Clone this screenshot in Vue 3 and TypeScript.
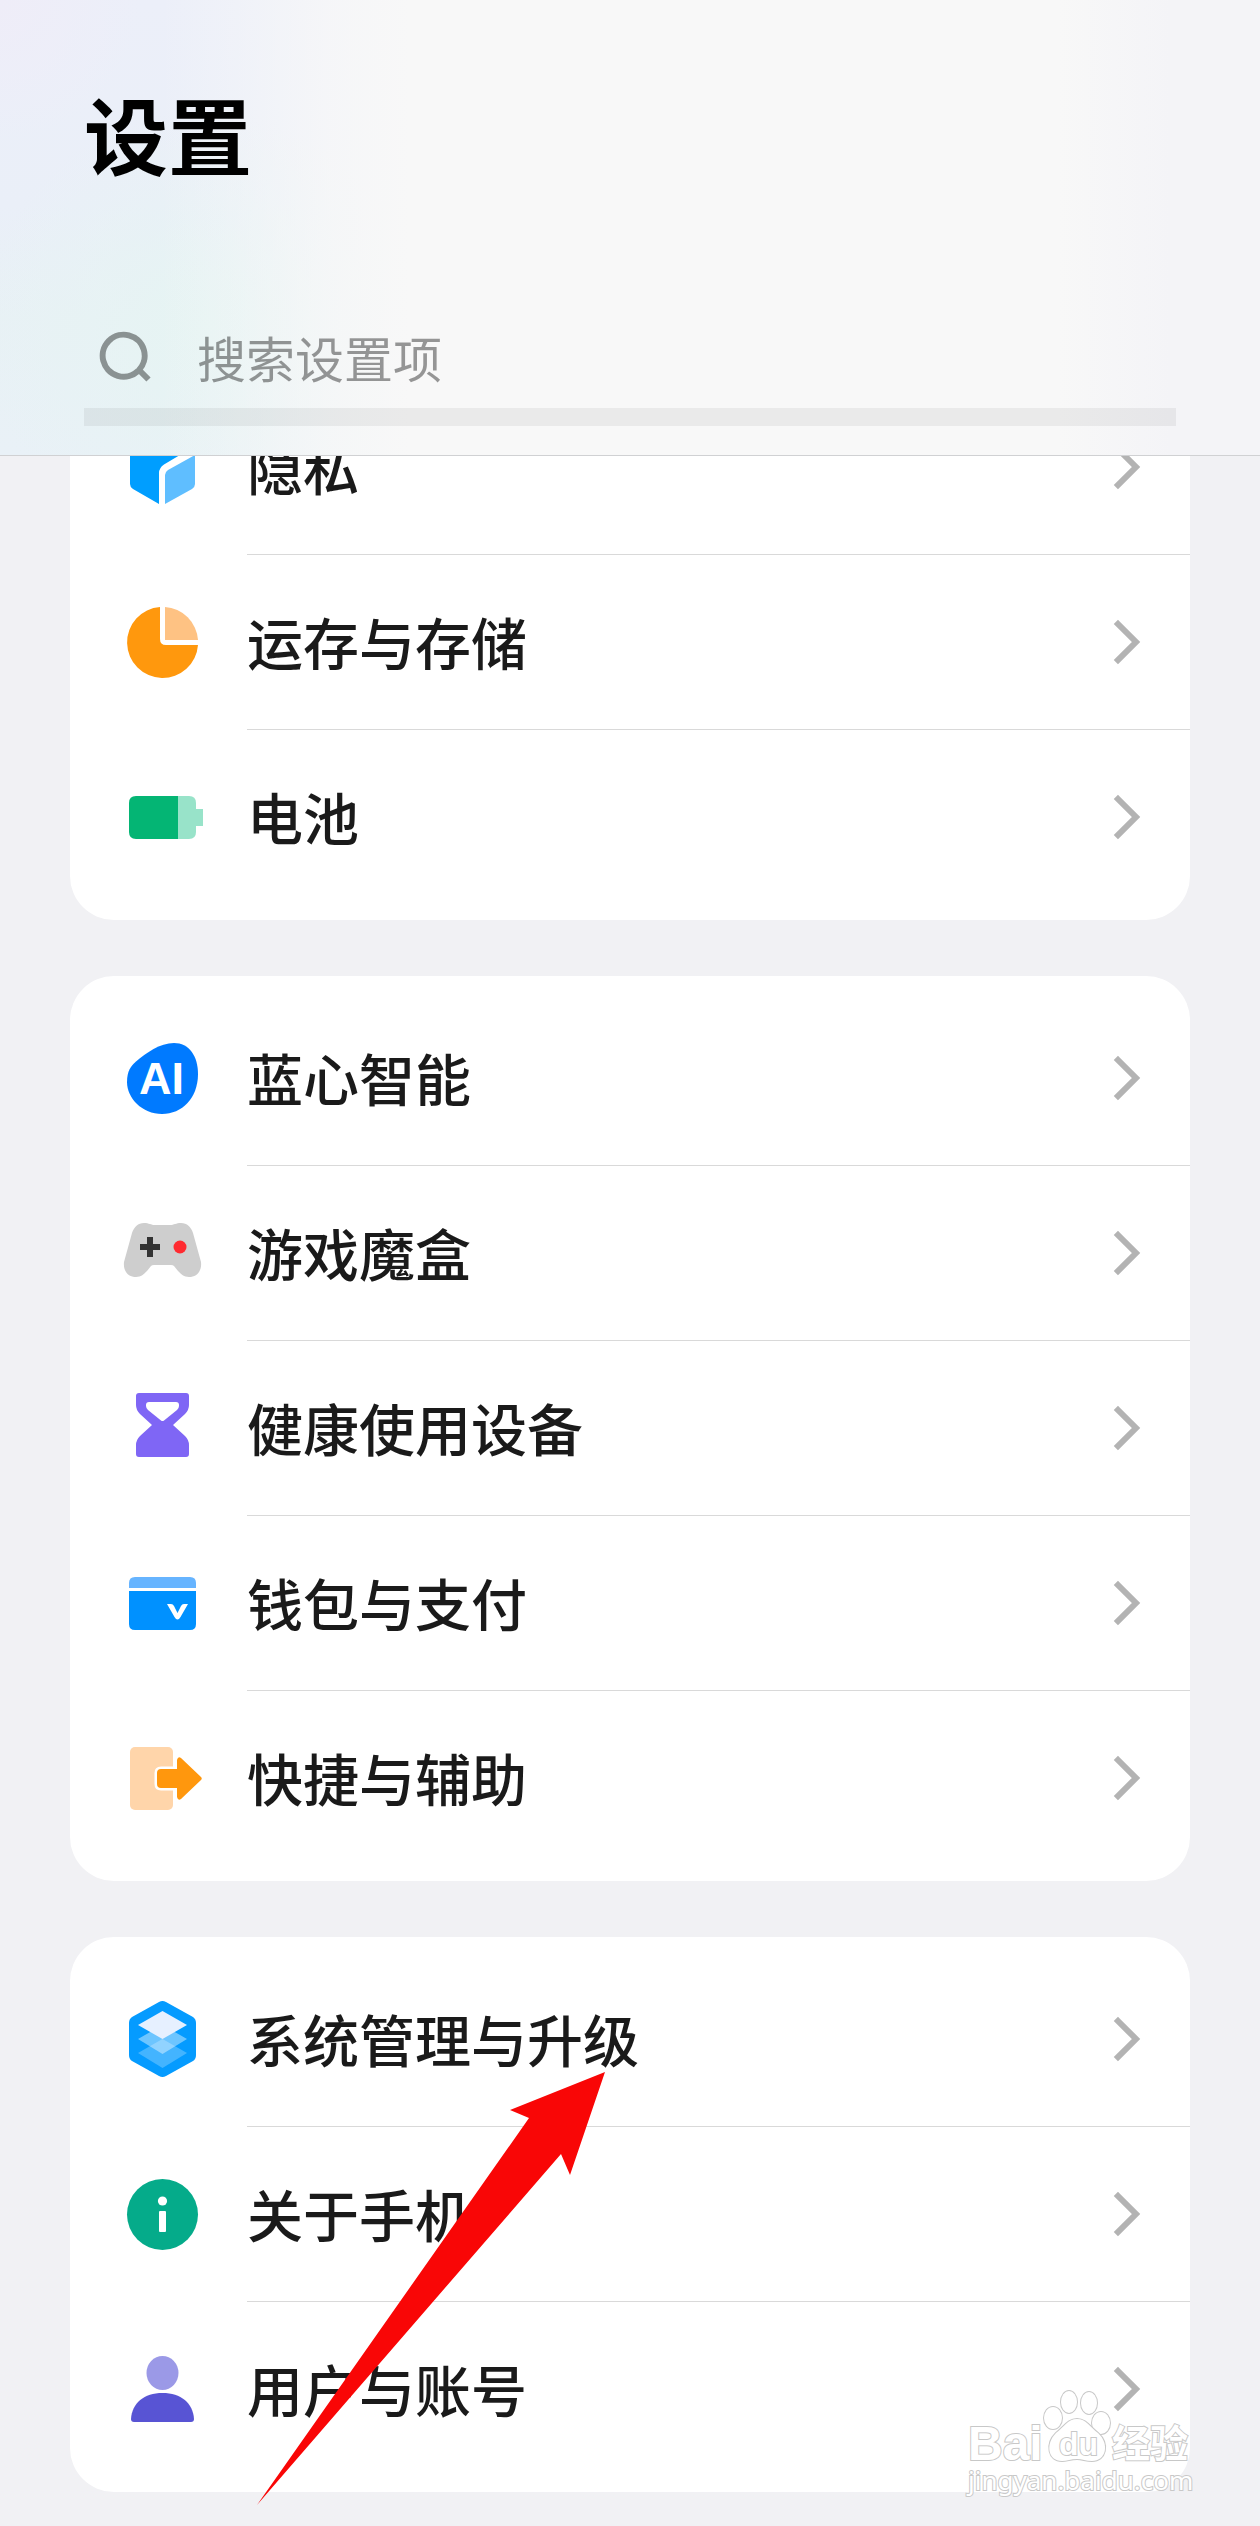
<script setup lang="ts">
interface SettingItem {
  id: string
  label: string
}

interface SettingGroup {
  id: string
  items: SettingItem[]
}

const groups: SettingGroup[] = [
  {
    id: 'device',
    items: [
      { id: 'privacy', label: '隐私' },
      { id: 'storage', label: '运存与存储' },
      { id: 'battery', label: '电池' },
    ],
  },
  {
    id: 'features',
    items: [
      { id: 'ai', label: '蓝心智能' },
      { id: 'game', label: '游戏魔盒' },
      { id: 'health', label: '健康使用设备' },
      { id: 'wallet', label: '钱包与支付' },
      { id: 'shortcut', label: '快捷与辅助' },
    ],
  },
  {
    id: 'system',
    items: [
      { id: 'upgrade', label: '系统管理与升级' },
      { id: 'about', label: '关于手机' },
      { id: 'account', label: '用户与账号' },
    ],
  },
]
</script>

<template>
  <div class="page">
    <header class="header">
      <h1 class="title">设置</h1>
      <label class="search">
        <svg class="search-icon" viewBox="0 0 54 54" aria-hidden="true">
          <path d="M41 39 A21 21 0 1 0 40 40 L41 39 L50.500 48.500" />
        </svg>
        <input class="search-input" type="search" placeholder="搜索设置项" aria-label="搜索设置项" />
      </label>
    </header>

    <main class="groups">
      <section v-for="group in groups" :key="group.id" class="group">
        <ul class="list">
          <li v-for="item in group.items" :key="item.id" class="item">
            <a class="row" :href="'#' + item.id">
              <svg class="icon" viewBox="0 0 81 81" aria-hidden="true">
                <g v-if="item.id === 'privacy'">
                  <path fill="#009eff" d="M8 24 Q8 20 12 18 L37 4 Q40.500 2 44 4 L68 17 Q72 20 68 22 L42 37.500 Q37 41 37 46 V77 L11 62 Q8 60 8 57Z" />
                  <path fill="#5fbeff" d="M73 28 V57 Q73 60 70 62 L43 77 V48 Q43 45 46 43Z" />
                </g>
                <g v-else-if="item.id === 'storage'">
                  <path fill="#ff980d" d="M38 5 A35.500 35.500 0 1 0 76 43 H44 Q38 43 38 37Z" />
                  <path fill="#fec283" d="M43 5 A35.500 35.500 0 0 1 76 38 H43Z" />
                </g>
                <g v-else-if="item.id === 'battery'">
                  <path fill="#98e3c9" d="M56 19 H67 Q74 19 74 26 V32 H81 V49 H74 V55 Q74 62 67 62 H56Z" />
                  <path fill="#04b574" d="M14 19 H56 V62 H14 Q7 62 7 55 V26 Q7 19 14 19Z" />
                </g>
                <g v-else-if="item.id === 'ai'">
                  <path fill="#007aff" d="M5 44 C5 33 9 28 14 23.500 C24 15 38 5 52 5 C67 5 76 18 76 36 C76 60 60 76 40 76 C20 76 5 60 5 44Z" />
                  <text x="17" y="56" class="ai-text">AI</text>
                </g>
                <g v-else-if="item.id === 'game'">
                  <path fill="#cecece" d="M22 10 C27 10 29 12 33 12 H48 C52 12 54 10 59 10 C65 10 69 14 71 20 L79 49 C80 58 75 64 67 64 C62 64 59 61 56 58 L52 53 Q51 52 49 52 H32 Q30 52 29 53 L25 58 C22 61 19 64 14 64 C6 64 1 58 2 49 L10 20 C12 14 16 10 22 10Z" />
                  <path fill="#333" d="M25 24 H31 V31 H38 V37 H31 V44 H25 V37 H18 V31 H25Z" />
                  <circle cx="58" cy="34" r="6.500" fill="#ff2a30" />
                </g>
                <g v-else-if="item.id === 'health'">
                  <path fill="#7f66f5" d="M17 5 H64 Q67 5 67 8 V17 Q67 22 63 26 L51 37 L63 48 Q67 52 67 57 V66 Q67 69 64 69 H17 Q14 69 14 66 V57 Q14 52 18 48 L30 37 L18 26 Q14 22 14 17 V8 Q14 5 17 5Z" />
                  <path fill="#fff" d="M27 14 H54 Q57 14 57 17 V18 Q57 20 55 22 L42 32.500 Q40.500 33.500 39 32.500 L26 22 Q24 20 24 18 V17 Q24 14 27 14Z" />
                </g>
                <g v-else-if="item.id === 'wallet'">
                  <path fill="#66b4ff" d="M7 25 V20 Q7 14 13 14 H68 Q74 14 74 20 V25Z" />
                  <path fill="#0091ff" d="M7 28 H74 V61 Q74 67 68 67 H13 Q7 67 7 61Z" />
                  <path fill="#fff" d="M45 41 H49 Q51 41 52 43 L55.500 50 L59 43 Q60 41 62 41 H66 L58.500 54 Q55.500 59 52.500 54Z" />
                </g>
                <g v-else-if="item.id === 'shortcut'">
                  <rect x="8" y="9" width="43" height="63" rx="5" fill="#ffd5aa" />
                  <path class="exit-arrow" d="M39 31 H55 V22 Q56 18 59 20 L79 39 Q80.500 40.500 79 42 L59 61 Q56 63 55 59 V50 H39 Q35 50 35 46 V35 Q35 31 39 31Z" />
                </g>
                <g v-else-if="item.id === 'upgrade'">
                  <path fill="#059bff" d="M37 3 Q40.500 1 44 3 L71 18 Q74 20 74 24 V56 Q74 60 71 62 L44 77 Q40.500 79 37 77 L10 62 Q7 60 7 56 V24 Q7 20 10 18Z" />
                  <path fill="#fff" fill-opacity=".25" d="M40.500 40 L65 54 L40.500 69 L16 54Z" />
                  <path fill="#fff" fill-opacity=".42" d="M40.500 26 L65 40 L40.500 55 L16 40Z" />
                  <path fill="#e6f0ff" d="M40.500 12 L65 26 L40.500 40 L16 26Z" />
                </g>
                <g v-else-if="item.id === 'about'">
                  <circle cx="40.500" cy="40.500" r="35.500" fill="#05ab8a" />
                  <circle cx="40.500" cy="27" r="4.600" fill="#fff" />
                  <rect x="37" y="37" width="7" height="21" rx="1" fill="#fff" />
                </g>
                <g v-else>
                  <ellipse cx="40.500" cy="24" rx="16" ry="17" fill="#9b99e7" />
                  <path fill="#5854d4" d="M12 73 Q9 73 9 70 C10 54 22 44 40.500 44 C59 44 71 54 72 70 Q72 73 69 73Z" />
                </g>
              </svg>
              <span class="body">
                <span class="label">{{ item.label }}</span>
                <svg class="chevron" viewBox="0 0 30 49" aria-hidden="true">
                  <path d="M7 6 L25 24 L7 42" />
                </svg>
              </span>
            </a>
          </li>
        </ul>
        <svg v-if="group.id === 'system'" class="pointer" viewBox="0 0 348 433" aria-hidden="true">
          <path d="M348 0 L313 103 L304 82 L0 433 L272 46 L253 38Z" />
        </svg>
      </section>
    </main>

    <svg class="watermark" viewBox="0 0 236 116" role="img" aria-label="Baidu 经验">
      <g class="mark">
        <text x="5" y="76" class="mark-brand">Bai</text>
        <ellipse cx="90" cy="34" rx="9" ry="11" />
        <ellipse cx="106" cy="18" rx="8" ry="11" />
        <ellipse cx="126" cy="19" rx="8" ry="11" />
        <ellipse cx="138" cy="39" rx="9" ry="11" />
        <path d="M114 35 C123 35 127 43 135 49 C147 60 143 77 129 77 C123 77 119 75 114 75 C108 75 104 77 99 77 C85 77 82 60 93 49 C101 43 105 35 114 35Z" />
        <text x="96" y="71" class="mark-du">du</text>
        <text x="149" y="73" class="mark-cn">经验</text>
        <text x="5" y="106" class="mark-url">jingyan.baidu.com</text>
      </g>
    </svg>
  </div>
</template>

<style>
body {
  background: #f1f1f4;
}
</style>

<style scoped>
.page {
  position: relative;
  overflow: hidden;
  background: #f1f1f4;
  font-family: "Noto Sans CJK SC", "Noto Sans", sans-serif;
}

.header {
  position: relative;
  z-index: 1;
  padding: 91px 84px 29px;
  border-bottom: 1px solid #d0d1d3;
  background:
    linear-gradient(90deg, rgba(248, 248, 248, 0) 0, rgba(248, 248, 248, 0) 160px, rgba(248, 248, 248, 0.35) 240px, rgba(248, 248, 248, 0.8) 330px, #f8f8f8 410px, #f8f8f8 84%, #f4f4f7 93%),
    radial-gradient(circle at 0 0, #efedf8 0, rgba(239, 237, 248, 0) 140px),
    radial-gradient(circle at 200px 330px, #e6f4f3 0, rgba(230, 244, 243, 0) 220px),
    linear-gradient(180deg, #eceff9 0, #eaeff8 45%, #e8f1f5 70%, #e9f1f7 100%);
}

.title {
  margin: 0;
  color: #000;
  font-size: 84px;
  font-weight: 700;
  line-height: 84px;
}

.search {
  display: flex;
  align-items: center;
  height: 100px;
  margin-top: 133px;
  padding-left: 14px;
  border-bottom: 18px solid rgba(0, 0, 0, 0.055);
}

.search-icon {
  flex: none;
  width: 54px;
  height: 54px;
  fill: none;
  stroke: rgba(0, 0, 0, 0.4);
  stroke-width: 6;
}

.search-input {
  flex: 1;
  min-width: 0;
  height: 72px;
  margin: 0 0 2px 45px;
  padding: 0;
  border: 0;
  outline: 0;
  background: transparent;
  color: #1a1a1a;
  font-family: inherit;
  font-size: 49px;
  line-height: 72px;
}

.search-input::placeholder {
  color: rgba(0, 0, 0, 0.4);
  opacity: 1;
}

.groups {
  display: flex;
  flex-direction: column;
  gap: 56px;
  margin-top: -91px;
  padding: 0 70px 34px;
}

.group {
  position: relative;
  padding: 15px 0;
  border-radius: 44px;
  background: #fff;
}

.list {
  margin: 0;
  padding: 0;
  list-style: none;
}

.row {
  display: flex;
  align-items: center;
  padding-left: 52px;
  color: #1a1a1a;
  text-decoration: none;
}

.icon {
  flex: none;
  width: 81px;
  height: 81px;
}

.ai-text {
  fill: #fff;
  font-family: "Liberation Sans", sans-serif;
  font-size: 45px;
  font-weight: 700;
}

.exit-arrow {
  fill: #ff970d;
  stroke: #fff;
  stroke-width: 5;
  paint-order: stroke;
}

.body {
  display: flex;
  flex: 1;
  align-items: center;
  justify-content: space-between;
  box-sizing: border-box;
  height: 175px;
  margin-left: 44px;
  padding-right: 49px;
  border-bottom: 1px solid #d9d9d9;
}

.item:last-child .body {
  border-bottom-color: transparent;
}

.label {
  padding-bottom: 2px;
  font-size: 56px;
  font-weight: 500;
  line-height: 80px;
}

.chevron {
  flex: none;
  width: 30px;
  height: 49px;
  fill: none;
  stroke: #b3b3b3;
  stroke-width: 6;
  stroke-linecap: square;
}

.pointer {
  position: absolute;
  top: 135px;
  left: 187px;
  width: 348px;
  height: 433px;
  fill: #f90606;
}

.watermark {
  position: absolute;
  right: 61px;
  bottom: 26px;
  width: 236px;
  height: 116px;
}

.mark {
  fill: #fff;
  stroke: #c8c8c8;
  stroke-width: 2;
  paint-order: stroke;
}

.mark-brand,
.mark-du {
  font-family: "Liberation Sans", sans-serif;
  font-weight: 700;
}

.mark-brand {
  font-size: 48px;
}

.mark-du {
  font-size: 32px;
}

.mark-cn {
  font-size: 38px;
  font-weight: 700;
}

.mark-url {
  font-family: "Noto Sans", sans-serif;
  font-size: 26px;
}
</style>
